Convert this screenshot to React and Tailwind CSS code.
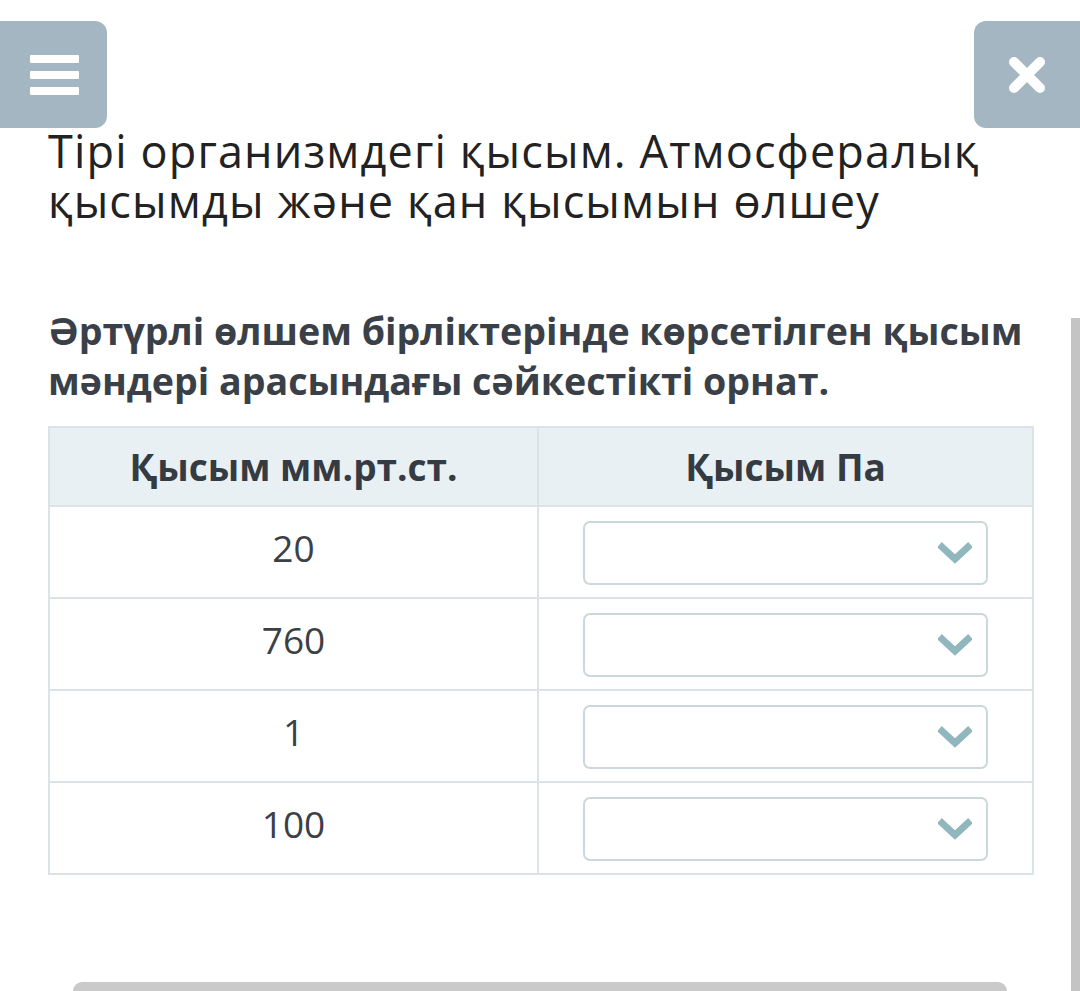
import React from 'react';

const rows = ['20', '760', '1', '100'];

const Chevron = () => (
    <svg width="34" height="22" viewBox="0 0 34 22" className="shrink-0">
        <path d="M4 5 L17 17 L30 5" fill="none" stroke="#8fb7bd" strokeWidth="7" strokeLinecap="square" strokeLinejoin="miter" />
    </svg>
);

const App = () => {
    return (
        <div className="relative min-h-[991px] w-[1080px] overflow-hidden bg-white" style={{ fontFamily: '"Open Sans", "Noto Sans", sans-serif' }}>
            {/* scrollbar */}
            <div className="absolute right-0 top-[318px] h-[673px] w-[9px] bg-[#c4c4c4]" />

            <div className="flex justify-between pt-[21px]">
                <button className="flex h-[107px] w-[107px] flex-col items-center justify-center gap-[8px] rounded-r-[12px] bg-[#a3b6c2] pl-[2px]">
                    <span className="block h-[8px] w-[49px] rounded-[1px] bg-white" />
                    <span className="block h-[8px] w-[49px] rounded-[1px] bg-white" />
                    <span className="block h-[8px] w-[49px] rounded-[1px] bg-white" />
                </button>
                <button className="flex h-[107px] w-[106px] items-center justify-center rounded-l-[12px] bg-[#a3b6c2]">
                    <svg width="40" height="40" viewBox="0 0 40 40">
                        <path d="M7 7 L33 33 M33 7 L7 33" stroke="white" strokeWidth="10" strokeLinecap="round" />
                    </svg>
                </button>
            </div>

            <div className="pl-[48px] pr-[40px]">
                <h1 className="mt-[-2px] whitespace-nowrap text-[45px] leading-[50px] font-normal tracking-[1.15px] text-[#222222]">
                    Тірі организмдегі қысым. Атмосфералық
                    <br />
                    қысымды және қан қысымын өлшеу
                </h1>

                <p className="mt-[80px] whitespace-nowrap text-[37.6px] leading-[50px] font-bold text-[#3a4048]">
                    Әртүрлі өлшем бірліктерінде көрсетілген қысым
                    <br />
                    мәндері арасындағы сәйкестікті орнат.
                </p>

                <table className="mt-[20px] w-[986px] border-collapse border-2 border-[#dbe3e7] text-[37px]">
                    <thead>
                        <tr className="bg-[#e9f0f4]">
                            <th className="h-[79px] w-[491px] border-2 border-[#dbe3e7] font-bold text-[#353b42]">Қысым мм.рт.ст.</th>
                            <th className="h-[79px] border-2 border-[#dbe3e7] font-bold text-[#353b42]">Қысым Па</th>
                        </tr>
                    </thead>
                    <tbody>
                        {rows.map((r) => (
                            <tr key={r}>
                                <td className="h-[90px] border-2 border-[#dbe3e7] pb-[8px] text-center align-middle text-[#3b4047]">{r}</td>
                                <td className="h-[90px] border-2 border-[#dbe3e7] px-[44px] pt-[14px] pb-[12px] align-top">
                                    <div className="flex h-[64px] w-[405px] items-center justify-end rounded-[7px] border-2 border-[#cad8dc] pr-[14px]">
                                        <Chevron />
                                    </div>
                                </td>
                            </tr>
                        ))}
                    </tbody>
                </table>
            </div>

            <div className="absolute bottom-0 left-[73px] h-[9px] w-[934px] rounded-t-[10px] bg-[#cacaca]" />
        </div>
    );
};

export default App;
